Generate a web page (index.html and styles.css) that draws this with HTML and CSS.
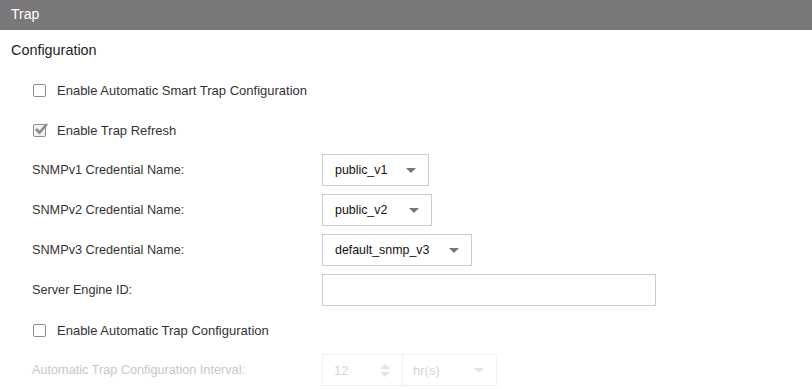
FILE: index.html
```html
<!DOCTYPE html>
<html lang="en">
<head>
    <meta charset="UTF-8">
    <title>Trap</title>
    <link rel="stylesheet" href="styles.css">
</head>
<body>
    <!-- Header -->
    <div class="header">Trap</div>

    <div class="section-title">Configuration</div>

    <div class="form">
        <div class="row">
            <span class="check"></span>
            <span class="check-label">Enable Automatic Smart Trap Configuration</span>
        </div>

        <div class="row">
            <span class="check checked">
                <svg width="16" height="14" viewBox="0 0 16 14">
                    <path d="M3 7 L6.5 10.5 L14 2" fill="none" stroke="#8c8c8c" stroke-width="2.6"/>
                </svg>
            </span>
            <span class="check-label">Enable Trap Refresh</span>
        </div>

        <div class="row">
            <label class="field-label">SNMPv1 Credential Name:</label>
            <div class="select w-v1">
                <span>public_v1</span>
                <span class="caret"></span>
            </div>
        </div>

        <div class="row">
            <label class="field-label">SNMPv2 Credential Name:</label>
            <div class="select w-v2">
                <span>public_v2</span>
                <span class="caret"></span>
            </div>
        </div>

        <div class="row">
            <label class="field-label">SNMPv3 Credential Name:</label>
            <div class="select w-v3">
                <span>default_snmp_v3</span>
                <span class="caret"></span>
            </div>
        </div>

        <div class="row">
            <label class="field-label">Server Engine ID:</label>
            <div class="text-input"></div>
        </div>

        <div class="row">
            <span class="check"></span>
            <span class="check-label">Enable Automatic Trap Configuration</span>
        </div>

        <div class="row disabled">
            <label class="field-label">Automatic Trap Configuration Interval:</label>
            <div class="interval">
                <div class="number">
                    <span>12</span>
                    <span class="spin">
                        <span class="up"></span>
                        <span class="down"></span>
                    </span>
                </div>
                <div class="unit">
                    <span>hr(s)</span>
                    <span class="caret"></span>
                </div>
            </div>
        </div>
    </div>
</body>
</html>
```

FILE: styles.css
```css
/* General */
body {
    margin: 0;
    font-family: "Liberation Sans", Arial, sans-serif;
    font-size: 13px;
    color: #333;
    background: #fff;
}

/* Header */
.header {
    height: 30px;
    line-height: 28px;
    padding-left: 11px;
    background-color: #7a787b;
    color: #fff;
    font-size: 14px;
}

.section-title {
    margin-top: 10px;
    height: 20px;
    line-height: 20px;
    padding-left: 11px;
    font-size: 14.4px;
    color: #222;
}

/* Form rows */
.form {
    margin-top: 10px;
    padding-left: 32px;
}

.row {
    display: flex;
    align-items: center;
    height: 40px;
}

.field-label {
    width: 290px;
    font-size: 12.7px;
    color: #333;
}

.check {
    position: relative;
    width: 11px;
    height: 11px;
    margin-left: 1px;
    border: 1px solid #8e8e8e;
    border-radius: 2px;
    box-sizing: content-box;
}

.check.checked {
    background: #f2f2f2;
}

.check svg {
    position: absolute;
    left: -1px;
    top: -3px;
}

.check-label {
    margin-left: 11px;
    color: #333;
}

/* Select boxes */
.select {
    display: flex;
    align-items: center;
    justify-content: space-between;
    height: 32px;
    padding: 0 12px;
    border: 1px solid #ccc;
    box-sizing: border-box;
    color: #111;
    font-size: 12.4px;
}

.w-v1 { width: 107px; }
.w-v2 { width: 110px; }
.w-v3 { width: 150px; }

.caret {
    width: 0;
    height: 0;
    border-left: 5px solid transparent;
    border-right: 5px solid transparent;
    border-top: 5px solid #777;
}

.text-input {
    width: 334px;
    height: 32px;
    border: 1px solid #ccc;
    box-sizing: border-box;
}

/* Disabled interval */
.disabled .field-label {
    color: #c8c8c8;
}

.interval {
    display: flex;
    height: 32px;
    width: 175px;
    border: 1px solid #f0f0f0;
    box-sizing: border-box;
    color: #d4d4d4;
    font-size: 13px;
}

.number {
    display: flex;
    align-items: center;
    justify-content: space-between;
    width: 80px;
    padding: 0 12px 0 11px;
    border-right: 1px solid #f0f0f0;
    box-sizing: border-box;
}

.spin {
    display: flex;
    flex-direction: column;
    gap: 3px;
}

.spin .up,
.spin .down {
    width: 0;
    height: 0;
    border-left: 5px solid transparent;
    border-right: 5px solid transparent;
}

.spin .up {
    border-bottom: 5px solid #e4e4e4;
}

.spin .down {
    border-top: 5px solid #e4e4e4;
}

.unit {
    flex: 1;
    display: flex;
    align-items: center;
    justify-content: space-between;
    padding: 0 12px 0 10px;
}

.unit .caret {
    border-top-color: #e4e4e4;
}
```
